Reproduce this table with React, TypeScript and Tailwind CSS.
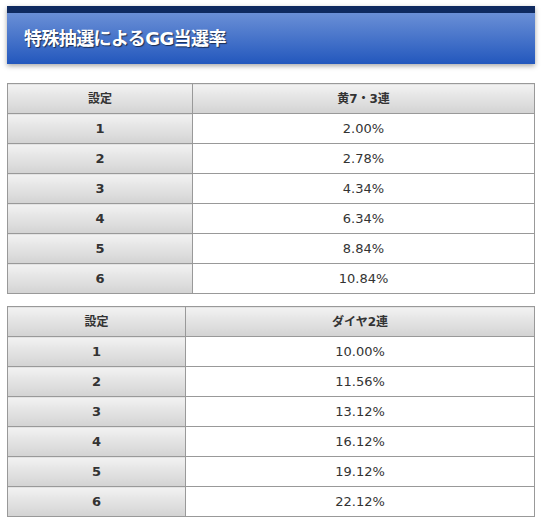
const font = { fontFamily: '"DejaVu Sans", "Noto Sans CJK JP", sans-serif' }

const table1 = [
  ["1", "2.00%"],
  ["2", "2.78%"],
  ["3", "4.34%"],
  ["4", "6.34%"],
  ["5", "8.84%"],
  ["6", "10.84%"],
]

const table2 = [
  ["1", "10.00%"],
  ["2", "11.56%"],
  ["3", "13.12%"],
  ["4", "16.12%"],
  ["5", "19.12%"],
  ["6", "22.12%"],
]

function RateTable({ title, rows, leftWidth }: { title: string; rows: string[][]; leftWidth: string }) {
  const th = "h-[30px] border border-[#999] bg-gradient-to-b from-[#f2f2f2] to-[#d3d3d3] text-center font-bold text-[12px] text-[#333] p-0"
  return (
    <table className="w-full border-collapse">
      <tbody>
        <tr>
          <td className={`${th} ${leftWidth}`}>設定</td>
          <td className={th}>{title}</td>
        </tr>
        {rows.map(([s, v]) => (
          <tr key={s}>
            <td className="h-[30px] border border-[#999] bg-gradient-to-b from-[#f2f2f2] to-[#d3d3d3] text-center font-bold text-[13px] text-[#333] p-0">
              {s}
            </td>
            <td className="h-[30px] border border-[#999] bg-white text-center text-[13px] text-[#333] p-0">{v}</td>
          </tr>
        ))}
      </tbody>
    </table>
  )
}

export default function App() {
  return (
    <div className="w-[542px] min-h-[527px] bg-white px-[7px] pt-[6px]" style={font}>
      <div className="border-t-[7px] border-[#0f2a60] bg-gradient-to-b from-[#6a8fd6] to-[#2257bd] h-[58px] flex items-center pl-[17px] shadow-[0_2px_5px_rgba(0,0,0,0.35)]">
        <h1 className="text-white font-bold text-[18px] tracking-[-0.6px] [text-shadow:1px_1px_1px_rgba(0,0,0,0.6)]">
          特殊抽選によるGG当選率
        </h1>
      </div>
      <div className="mt-[19px] w-[528px]">
        <RateTable title="黄7・3連" rows={table1} leftWidth="w-[185px]" />
      </div>
      <div className="mt-[12px] w-[528px]">
        <RateTable title="ダイヤ2連" rows={table2} leftWidth="w-[178px]" />
      </div>
    </div>
  )
}
